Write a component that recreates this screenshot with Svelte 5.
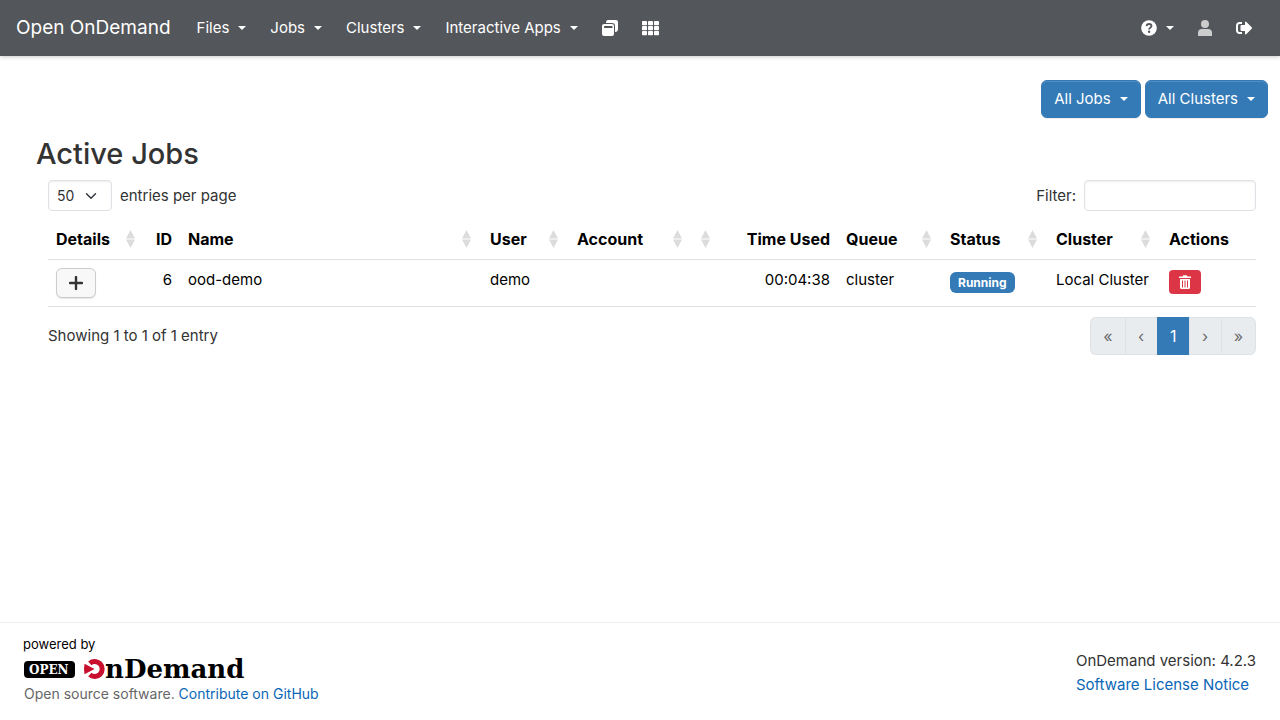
<!-- Active Jobs page -->
<script>
  const menus = ['Files', 'Jobs', 'Clusters', 'Interactive Apps'];

  const columns = [
    { key: 'details', label: 'Details', sortable: true },
    { key: 'id', label: 'ID', numeric: true },
    { key: 'name', label: 'Name', sortable: true },
    { key: 'user', label: 'User', sortable: true },
    { key: 'account', label: 'Account', sortable: true },
    { key: 'extra', label: '', sortable: true },
    { key: 'time', label: 'Time Used', numeric: true },
    { key: 'queue', label: 'Queue', sortable: true },
    { key: 'status', label: 'Status', sortable: true },
    { key: 'cluster', label: 'Cluster', sortable: true },
    { key: 'actions', label: 'Actions' }
  ];

  const jobs = [
    {
      id: 6,
      name: 'ood-demo',
      user: 'demo',
      account: '',
      time: '00:04:38',
      queue: 'cluster',
      status: 'Running',
      cluster: 'Local Cluster'
    }
  ];

  let pageSize = $state(50);
  let filter = $state('');

  let shown = $derived(
    jobs.filter((j) => Object.values(j).join(' ').toLowerCase().includes(filter.toLowerCase()))
  );
</script>

<div class="page">
  <header class="navbar">
    <a class="brand" href="#home">Open OnDemand</a>
    <nav class="nav-main">
      {#each menus as menu}
        <button class="nav-item caret" type="button">{menu}</button>
      {/each}
      <a class="nav-item" href="#sessions" aria-label="My Interactive Sessions">
        <svg width="16" height="16" viewBox="0 0 16 16" fill="#fff">
          <path d="M6 0h8a2 2 0 0 1 2 2v7a3 3 0 0 1-3 3V6a3 3 0 0 0-3-3H4a2 3 0 0 1 2-3z" />
          <path fill-rule="evenodd" d="M2 4h8a2 2 0 0 1 2 2v8a2 2 0 0 1-2 2H2a2 2 0 0 1-2-2V6a2 2 0 0 1 2-2zM2.500 6a.5.500 0 0 0-.5.500v1c0 .3.200.5.500.5h7.500a.5.500 0 0 0 .5-.5v-1A.5.500 0 0 0 10 6z" />
        </svg>
      </a>
      <a class="nav-item" href="#apps" aria-label="All Apps">
        <svg width="17" height="16" viewBox="0 0 17 16" fill="#fff">
          {#each [1, 6, 11] as y}
            {#each [0, 6, 12] as x}
              <rect {x} {y} width="5" height="4.200" rx="0.8" />
            {/each}
          {/each}
        </svg>
      </a>
    </nav>
    <nav class="nav-side">
      <button class="nav-item caret" type="button" aria-label="Help">
        <svg width="16" height="16" viewBox="0 0 16 16">
          <circle cx="8" cy="8" r="7.800" fill="#fff" />
          <path d="M5.500 6.200c.2-1.400 1.100-2.200 2.500-2.200 1.500 0 2.500.8 2.500 2 0 1.700-2.400 1.700-2.400 3.400" fill="none" stroke="#53565a" stroke-width="1.800" />
          <circle cx="8.100" cy="11.700" r="1.200" fill="#53565a" />
        </svg>
      </button>
      <span class="nav-item user" role="img" aria-label="Logged in user">
        <svg width="14" height="16" viewBox="0 0 14 16" fill="#ccc">
          <circle cx="7" cy="4" r="4" />
          <path d="M0 16v-3a4 4 0 0 1 4-4h6a4 4 0 0 1 4 4v3z" />
        </svg>
      </span>
      <a class="nav-item" href="#logout" aria-label="Log Out">
        <svg width="16" height="16" viewBox="0 0 16 16" fill="#fff">
          <path d="M6 3H3.500A2.500 2.500 0 0 0 1 5.500v5A2.500 2.500 0 0 0 3.500 13H6" fill="none" stroke="#fff" stroke-width="2" />
          <path d="M9 2.200c0-.6.700-.9 1.200-.5l5.500 5.600c.4.400.4 1 0 1.400l-5.500 5.600c-.5.500-1.200.2-1.200-.5V11H5.500a1 1 0 0 1-1-1V6a1 1 0 0 1 1-1H9z" />
        </svg>
      </a>
    </nav>
  </header>

  <main>
    <div class="toolbar">
      <button class="btn-primary caret" type="button">All Jobs</button>
      <button class="btn-primary caret" type="button">All Clusters</button>
    </div>

    <h1>Active Jobs</h1>

    <section class="jobs">
      <div class="row">
        <div class="field">
          <select id="page-size" bind:value={pageSize}>
            <option value={10}>10</option>
            <option value={25}>25</option>
            <option value={50}>50</option>
          </select>
          <label for="page-size">entries per page</label>
        </div>
        <div class="field">
          <label for="filter">Filter:</label>
          <input id="filter" type="search" bind:value={filter} />
        </div>
      </div>

      <table>
        <colgroup>
          {#each columns as col}
            <col class="col-{col.key}" />
          {/each}
        </colgroup>
        <thead>
          <tr>
            {#each columns as col}
              <th class:numeric={col.numeric}>
                <div class="head">
                  <span>{col.label}</span>
                  {#if col.sortable}
                    <svg class="sort" width="9" height="18" viewBox="0 0 9 18" fill="#dcdcdc">
                      <path d="M4.500 0 9 8.500H0zM0 9.500h9L4.500 18z" />
                    </svg>
                  {/if}
                </div>
              </th>
            {/each}
          </tr>
        </thead>
        <tbody>
          {#each shown as job}
            <tr>
              <td>
                <button class="btn-details" type="button" aria-label="Show details">
                  <svg width="14" height="14" viewBox="0 0 14 14">
                    <path d="M7 1v12M1 7h12" stroke="#333" stroke-width="2.400" stroke-linecap="round" />
                  </svg>
                </button>
              </td>
              <td class="numeric">{job.id}</td>
              <td>{job.name}</td>
              <td>{job.user}</td>
              <td>{job.account}</td>
              <td></td>
              <td class="numeric">{job.time}</td>
              <td>{job.queue}</td>
              <td><span class="badge">{job.status}</span></td>
              <td>{job.cluster}</td>
              <td>
                <button class="btn-delete" type="button" aria-label="Delete job">
                  <svg width="12" height="14" viewBox="0 0 12 14">
                    <path d="M0 1.500h3.500L4.200.3h3.600l.7 1.200H12V3H0z" fill="#fff" />
                    <path d="M1 4h10v8.500a1.500 1.500 0 0 1-1.500 1.500h-7A1.500 1.500 0 0 1 1 12.500z" fill="#fff" />
                    <path d="M3.500 5.500v7M6 5.500v7M8.500 5.500v7" stroke="#dc3545" />
                  </svg>
                </button>
              </td>
            </tr>
          {/each}
        </tbody>
      </table>

      <div class="row">
        <div>Showing 1 to {shown.length} of {shown.length} entry</div>
        <nav class="pagination" aria-label="pagination">
          <button type="button" disabled>«</button>
          <button type="button" disabled>‹</button>
          <button type="button" class="current">1</button>
          <button type="button" disabled>›</button>
          <button type="button" disabled>»</button>
        </nav>
      </div>
    </section>
  </main>

  <footer>
    <div>
      <svg class="logo" width="240" height="46" viewBox="0 0 240 46" role="img" aria-label="powered by Open OnDemand">
        <text x="-1" y="13" class="powered">powered by</text>
        <rect x="0" y="25" width="51" height="17" rx="4" />
        <text x="5" y="38" class="open">OPEN</text>
        <path d="M65.800 27.300A7.500 7.500 0 1 1 65.800 38.700" fill="none" stroke="#c8102e" stroke-width="5" />
        <path d="M60.500 27.800Q59.500 33 60.500 38.200L70.500 33z" fill="#c8102e" />
        <text x="81" y="42" class="ondemand">nDemand</text>
      </svg>
      <p class="tagline">Open source software. <a href="#github">Contribute on GitHub</a></p>
    </div>
    <div class="version">
      <div>OnDemand version: 4.2.3</div>
      <a href="#license">Software License Notice</a>
    </div>
  </footer>
</div>

<style>
  :global(body) {
    margin: 0;
    background: #fff;
    color: #333;
    font-family: Inter, 'Liberation Sans', sans-serif;
    font-size: 15px;
    line-height: 24px;
  }

  .page {
    display: flex;
    flex-direction: column;
    min-height: 100vh;
  }

  button,
  select,
  input {
    box-sizing: border-box;
    margin: 0;
    font: inherit;
    cursor: pointer;
  }

  a {
    color: #0a66b7;
    text-decoration: none;
  }

  svg {
    display: block;
  }

  .caret::after {
    content: '';
    margin-left: 9px;
    border: 4px solid transparent;
    border-top-color: currentColor;
    border-bottom: 0;
  }

  .navbar {
    display: flex;
    align-items: center;
    height: 56px;
    padding: 0 16px;
    background: #53565a;
    box-shadow: 0 1px 4px rgba(0, 0, 0, 0.2);
  }

  .brand {
    margin-right: 14px;
    color: #fff;
    font-size: 19px;
  }

  .nav-main,
  .nav-side {
    display: flex;
  }

  .nav-side {
    margin-left: auto;
  }

  .nav-item {
    display: flex;
    align-items: center;
    height: 40px;
    padding: 0 12px;
    border: 0;
    background: none;
    color: #fff;
  }

  main {
    flex: 1;
    padding: 24px 12px;
  }

  .toolbar {
    display: flex;
    justify-content: flex-end;
    gap: 4px;
  }

  .btn-primary {
    display: flex;
    align-items: center;
    height: 38px;
    padding: 0 12px;
    border: 1px solid #337ab7;
    border-radius: 6px;
    background: #337ab7;
    box-shadow: inset 0 1px 0 rgba(255, 255, 255, 0.15), 0 1px 1px rgba(0, 0, 0, 0.075);
    color: #fff;
  }

  h1 {
    margin: 17px 24px 7px;
    font-size: 29px;
    font-weight: 500;
    line-height: 38px;
  }

  .jobs {
    padding: 0 12px 0 36px;
  }

  .row {
    display: flex;
    align-items: center;
    justify-content: space-between;
  }

  .field {
    display: flex;
    align-items: center;
    gap: 8px;
  }

  select,
  input {
    height: 31px;
    border: 1px solid #dee2e6;
    border-radius: 4px;
    background: #fff;
    box-shadow: inset 0 1px 2px rgba(0, 0, 0, 0.075);
    color: #333;
    font-size: 14px;
  }

  select {
    width: 64px;
    padding: 0 8px;
    appearance: none;
    background: #fff url("data:image/svg+xml,%3csvg xmlns='http://www.w3.org/2000/svg' viewBox='0 0 16 16'%3e%3cpath fill='none' stroke='%23343a40' stroke-linecap='round' stroke-linejoin='round' stroke-width='2' d='m2 5 6 6 6-6'/%3e%3c/svg%3e") no-repeat right 14px center / 12px;
  }

  input {
    width: 172px;
    padding: 0 8px;
  }

  table {
    width: 100%;
    margin: 8px 0 10px;
    border-collapse: separate;
    border-spacing: 0;
    table-layout: fixed;
    color: #000;
  }

  .col-details { width: 98px; }
  .col-id { width: 34px; }
  .col-user { width: 87px; }
  .col-account { width: 124px; }
  .col-extra { width: 28px; }
  .col-time { width: 117px; }
  .col-queue { width: 104px; }
  .col-status { width: 106px; }
  .col-cluster { width: 113px; }
  .col-actions { width: 95px; }

  th,
  td {
    padding: 8px;
    border-bottom: 1px solid #dee2e6;
    text-align: left;
    vertical-align: top;
    white-space: nowrap;
  }

  th {
    font-size: 16px;
    font-weight: 700;
  }

  .head {
    display: flex;
    align-items: center;
    justify-content: space-between;
    height: 24px;
  }

  .sort {
    margin-left: auto;
    margin-right: 3px;
    flex: none;
  }

  .numeric {
    text-align: right;
  }

  .numeric .head {
    justify-content: flex-end;
  }

  .btn-details {
    display: flex;
    align-items: center;
    justify-content: center;
    width: 40px;
    height: 30px;
    padding: 0;
    border: 1px solid #ccc;
    border-radius: 6px;
    background: #f8f8f8;
    box-shadow: 0 1px 1px rgba(0, 0, 0, 0.1);
  }

  .badge {
    display: inline-block;
    margin-top: 4px;
    padding: 4px 8px;
    border-radius: 6px;
    background: #337ab7;
    color: #fff;
    font-size: 12px;
    font-weight: 700;
    line-height: 13px;
    vertical-align: top;
  }

  .btn-delete {
    display: flex;
    align-items: center;
    justify-content: center;
    width: 32px;
    height: 24px;
    margin-top: 2px;
    padding: 0;
    border: 0;
    border-radius: 4px;
    background: #dc3545;
  }

  .pagination {
    display: flex;
    height: 38px;
  }

  .pagination button {
    min-width: 32px;
    padding: 0 12px;
    border: 1px solid #dee2e6;
    border-right: 0;
    background: #e9ecef;
    color: #6b6b6b;
    font-size: 16px;
  }

  .pagination button:first-child {
    border-radius: 6px 0 0 6px;
  }

  .pagination button:last-child {
    border-right: 1px solid #dee2e6;
    border-radius: 0 6px 6px 0;
  }

  .pagination .current {
    border-color: #337ab7;
    background: #337ab7;
    color: #fff;
  }

  footer {
    display: flex;
    align-items: center;
    justify-content: space-between;
    padding: 13px 24px 14px;
    border-top: 1px solid #eee;
  }

  .logo {
    overflow: visible;
  }

  .powered {
    font-size: 13px;
  }

  .open {
    fill: #fff;
    font-family: 'DejaVu Serif', serif;
    font-size: 12px;
    font-weight: 700;
  }

  .ondemand {
    font-family: 'DejaVu Serif', serif;
    font-size: 26px;
    font-weight: 700;
  }

  .tagline {
    margin: 0;
    color: #666;
    font-size: 14px;
  }

  .version {
    padding-top: 3px;
  }
</style>
